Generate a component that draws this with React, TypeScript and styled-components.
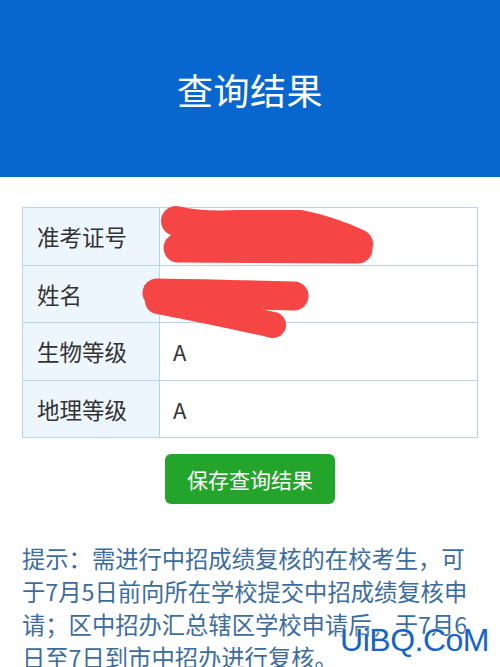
import React from "react";
import styled, { createGlobalStyle } from "styled-components";

const Global = createGlobalStyle`
  html, body { margin: 0; padding: 0; background: #ffffff; }
  body { font-family: "Noto Sans CJK SC", "Noto Sans", sans-serif; }
`;

const Page = styled.div`
  position: relative;
  width: 500px;
  height: 667px;
  overflow: hidden;
  background: #ffffff;
`;

const Header = styled.header`
  height: 177px;
  background: #0867cf;
  display: flex;
  align-items: center;
  justify-content: center;
`;

const Title = styled.h1`
  margin: 0;
  color: #ffffff;
  font-size: 36px;
  font-weight: 400;
  letter-spacing: 0.5px;
`;

const Content = styled.main`
  padding: 30px 22px 0;
  display: flex;
  flex-direction: column;
`;

const Table = styled.table`
  width: 456px;
  table-layout: fixed;
  border-collapse: collapse;
  border: 1.5px solid #b7d5e6;
`;

const Row = styled.tr`
  height: 57.5px;
`;

const Label = styled.th`
  box-sizing: border-box;
  width: 137px;
  padding: 0 0 0 14px;
  text-align: left;
  font-weight: 400;
  font-size: 22.5px;
  color: #333333;
  background: #eef6fd;
  border: 1.5px solid #b7d5e6;
`;

const Value = styled.td`
  padding: 0 0 0 13px;
  font-size: 22px;
  color: #333333;
  background: #ffffff;
  border: 1.5px solid #b7d5e6;
`;

const SaveButton = styled.button`
  margin: 16px auto 0;
  width: 170px;
  height: 50px;
  border: none;
  border-radius: 6px;
  background: #23a42b;
  color: #ffffff;
  font-family: inherit;
  font-size: 21px;
  display: flex;
  align-items: center;
  justify-content: center;
`;

const Tip = styled.p`
  margin: 38px 0 0;
  font-size: 23.3px;
  line-height: 33px;
  color: #3c6c9e;
`;

const Overlay = styled.svg`
  position: absolute;
  left: 0;
  top: 0;
  pointer-events: none;
`;

const Watermark = styled.div`
  position: absolute;
  right: 11px;
  bottom: 8px;
  font-family: "Liberation Sans", Arial, sans-serif;
  font-size: 32px;
  color: #1563c9;
  text-shadow: 0 0 2px #fff, 0 0 2px #fff;
  letter-spacing: -0.5px;
`;

const rows: [string, string][] = [
  ["准考证号", ""],
  ["姓名", ""],
  ["生物等级", "A"],
  ["地理等级", "A"],
];

export default function App() {
  return (
    <Page>
      <Global />
      <Header>
        <Title>查询结果</Title>
      </Header>
      <Content>
        <Table>
          <tbody>
            {rows.map(([k, v]) => (
              <Row key={k}>
                <Label>{k}</Label>
                <Value>{v}</Value>
              </Row>
            ))}
          </tbody>
        </Table>
        <SaveButton>保存查询结果</SaveButton>
        <Tip>
          提示：需进行中招成绩复核的在校考生，可于7月5日前向所在学校提交中招成绩复核申请；区中招办汇总辖区学校申请后，于7月6日至7日到市中招办进行复核。
        </Tip>
      </Content>
      <Overlay width="500" height="667" viewBox="0 0 500 667">
        <g fill="none" stroke="#f54545" strokeLinecap="round" strokeLinejoin="round">
          <path d="M176 221 Q 200 227 240 225 L 300 225 Q 330 231 358 244" strokeWidth="30" />
          <path d="M178 248 L 358 249" strokeWidth="29" />
          <path d="M190 236 L 340 238" strokeWidth="20" />
          <path d="M157 293 Q 220 294 294 296" strokeWidth="29" />
          <path d="M158 301 Q 220 313 273 325" strokeWidth="26" />
        </g>
      </Overlay>
      <Watermark>UiBQ.CoM</Watermark>
    </Page>
  );
}
